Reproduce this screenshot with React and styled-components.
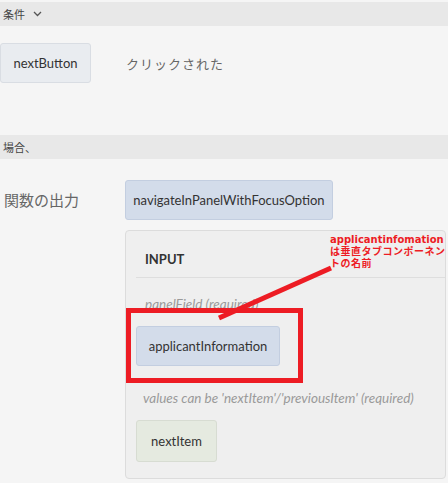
import React from 'react';
import styled, { createGlobalStyle } from 'styled-components';

const Global = createGlobalStyle`
  body {
    margin: 0;
    background: #f5f5f5;
    font-family: Lato, 'Noto Sans CJK JP', sans-serif;
    color: #333;
  }
`;

const Page = styled.div`
  width: 448px;
  height: 483px;
  overflow: hidden;
  padding-top: 2px;
  box-sizing: border-box;
`;

const Bar = styled.div`
  height: 24px;
  background: #e8e8e8;
  display: flex;
  align-items: center;
  padding-left: 3px;
  font-size: 11px;
  color: #444;
  gap: 8px;
  margin-top: ${p => p.top || 0}px;
`;

const Row = styled.div`
  display: flex;
  align-items: center;
  margin-top: ${p => p.top || 0}px;
`;

const Chip = styled.div`
  box-sizing: border-box;
  height: ${p => p.h || 40}px;
  width: ${p => p.w}px;
  display: flex;
  align-items: center;
  justify-content: center;
  border-radius: 3px;
  font-size: 13px;
  color: #333;
  background: ${p => p.bg || '#e9ecf0'};
  border: 1px solid ${p => p.bd || '#d9dde3'};
`;

const Said = styled.div`
  margin-left: 35px;
  font-size: 13px;
  color: #666;
  letter-spacing: 1px;
`;

const Label = styled.div`
  width: 121px;
  padding-left: 4px;
  font-size: 15px;
  color: #666;
  align-self: flex-start;
  margin-top: 9px;
`;

const Panel = styled.div`
  position: relative;
  margin: 10px 0 0 125px;
  width: 321px;
  height: 249px;
  box-sizing: border-box;
  border: 1px solid #dcdcdc;
  border-radius: 4px;
  background: #efefef;
`;

const PanelHead = styled.div`
  height: 47px;
  box-sizing: border-box;
  padding: 10px 0 0 9px;
  margin-left: 10px;
  border-bottom: 1px solid #dedede;
  display: flex;
  align-items: center;
  font-size: 13px;
  font-weight: bold;
  color: #333;
`;

const PanelBody = styled.div`
  padding-left: 10px;
  display: flex;
  flex-direction: column;
  align-items: flex-start;
`;

const Hint = styled.div`
  font-size: 13.5px;
  font-style: italic;
  color: #9a9a9a;
  margin: ${p => p.m};
  padding-left: ${p => p.pl || 9}px;
  line-height: 18px;
`;

const RedBox = styled.div`
  position: absolute;
  left: 0px;
  top: 77px;
  width: 177px;
  height: 75px;
  box-sizing: border-box;
  border: 5px solid #ed1c24;
`;

const Note = styled.div`
  position: absolute;
  left: 204px;
  top: 3px;
  font-family: 'DejaVu Sans', 'Noto Sans CJK JP', sans-serif;
  font-size: 10px;
  font-weight: bold;
  line-height: 12px;
  white-space: nowrap;
  color: #ed1c24;
`;

const Wide = styled.span`
  letter-spacing: 0.5px;
`;

const Arrow = styled.svg`
  position: absolute;
  left: 0;
  top: 0;
  overflow: visible;
`;

export default function App() {
  return (
    <Page>
      <Global />
      <Bar>
        <span>条件</span>
        <svg width="9" height="6" viewBox="0 0 9 6">
          <path d="M1 1l3.5 3.5L8 1" fill="none" stroke="#555" strokeWidth="1.3" />
        </svg>
      </Bar>
      <Row top={17}>
        <Chip w={91}>nextButton</Chip>
        <Said>クリックされた</Said>
      </Row>
      <Bar top={52}>場合、</Bar>
      <Row top={21}>
        <Label>関数の出力</Label>
        <Chip w={208} bg="#d3dcea" bd="#c3cee0">navigateInPanelWithFocusOption</Chip>
      </Row>
      <Panel>
        <PanelHead>INPUT</PanelHead>
        <PanelBody>
          <Hint m="17px 0 13px">panelField (required)</Hint>
          <Chip w={144} bg="#d3dcea" bd="#c3cee0">applicantInformation</Chip>
          <Hint m="23px 0 13px" pl={7}>values can be 'nextItem'/'previousItem' (required)</Hint>
          <Chip w={81} h={42} bg="#e5eae0" bd="#d7dcd2">nextItem</Chip>
        </PanelBody>
        <RedBox />
        <Arrow width="1" height="1">
          <line x1="205" y1="37" x2="93" y2="87" stroke="#ed1c24" strokeWidth="5" />
        </Arrow>
        <Note>
          applicantinfomation<br /><Wide>は垂直タブコンポーネン</Wide><br /><Wide>トの名前</Wide>
        </Note>
      </Panel>
    </Page>
  );
}
